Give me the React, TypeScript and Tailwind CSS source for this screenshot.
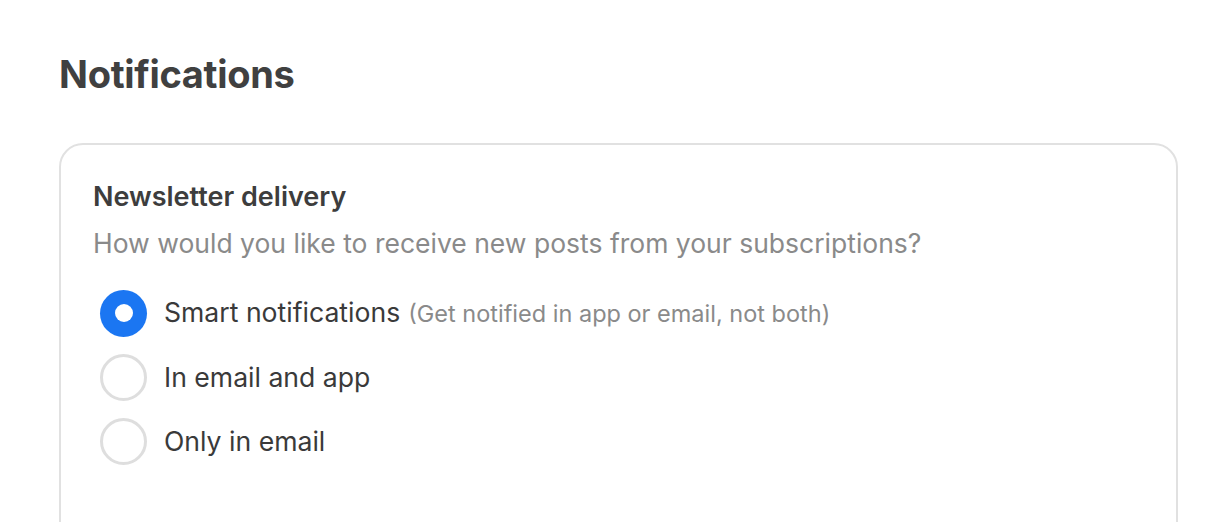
import React from "react";

const options = [
  { label: "Smart notifications", hint: "(Get notified in app or email, not both)", checked: true },
  { label: "In email and app", hint: "", checked: false },
  { label: "Only in email", hint: "", checked: false },
];

export default function App() {
  return (
    <div className="h-[522px] overflow-hidden bg-white pl-[59px] pr-[54px] pt-[50px] font-['Inter',sans-serif]">
      <h1 className="text-[38px] font-bold leading-[48px] text-[#404040] tracking-[-0.3px]">Notifications</h1>
      <div className="mt-[45px] h-[420px] rounded-[24px] border-2 border-[#e1e1e1] px-[32px] pt-[36px]">
        <h2 className="text-[27px] font-semibold leading-[32px] text-[#3d3d3d]">Newsletter delivery</h2>
        <p className="mt-[14px] text-[26.5px] leading-[32px] text-[#8a8a8a]">
          How would you like to receive new posts from your subscriptions?
        </p>
        <div className="mt-[30px] flex flex-col gap-[16px] pl-[7px]">
          {options.map((o) => (
            <label key={o.label} className="flex h-[48px] items-center gap-[17px]">
              {o.checked ? (
                <span className="flex h-[47px] w-[47px] items-center justify-center rounded-full bg-[#1b76f2]">
                  <span className="h-[18px] w-[18px] rounded-full bg-white" />
                </span>
              ) : (
                <span className="h-[47px] w-[47px] rounded-full border-[3px] border-[#dedede]" />
              )}
              <span className="text-[26.6px] leading-[32px] text-[#3a3a3a]">
                {o.label}
                {o.hint && <span className="ml-[8px] text-[23.5px] text-[#8a8a8a]">{o.hint}</span>}
              </span>
            </label>
          ))}
        </div>
      </div>
    </div>
  );
}
